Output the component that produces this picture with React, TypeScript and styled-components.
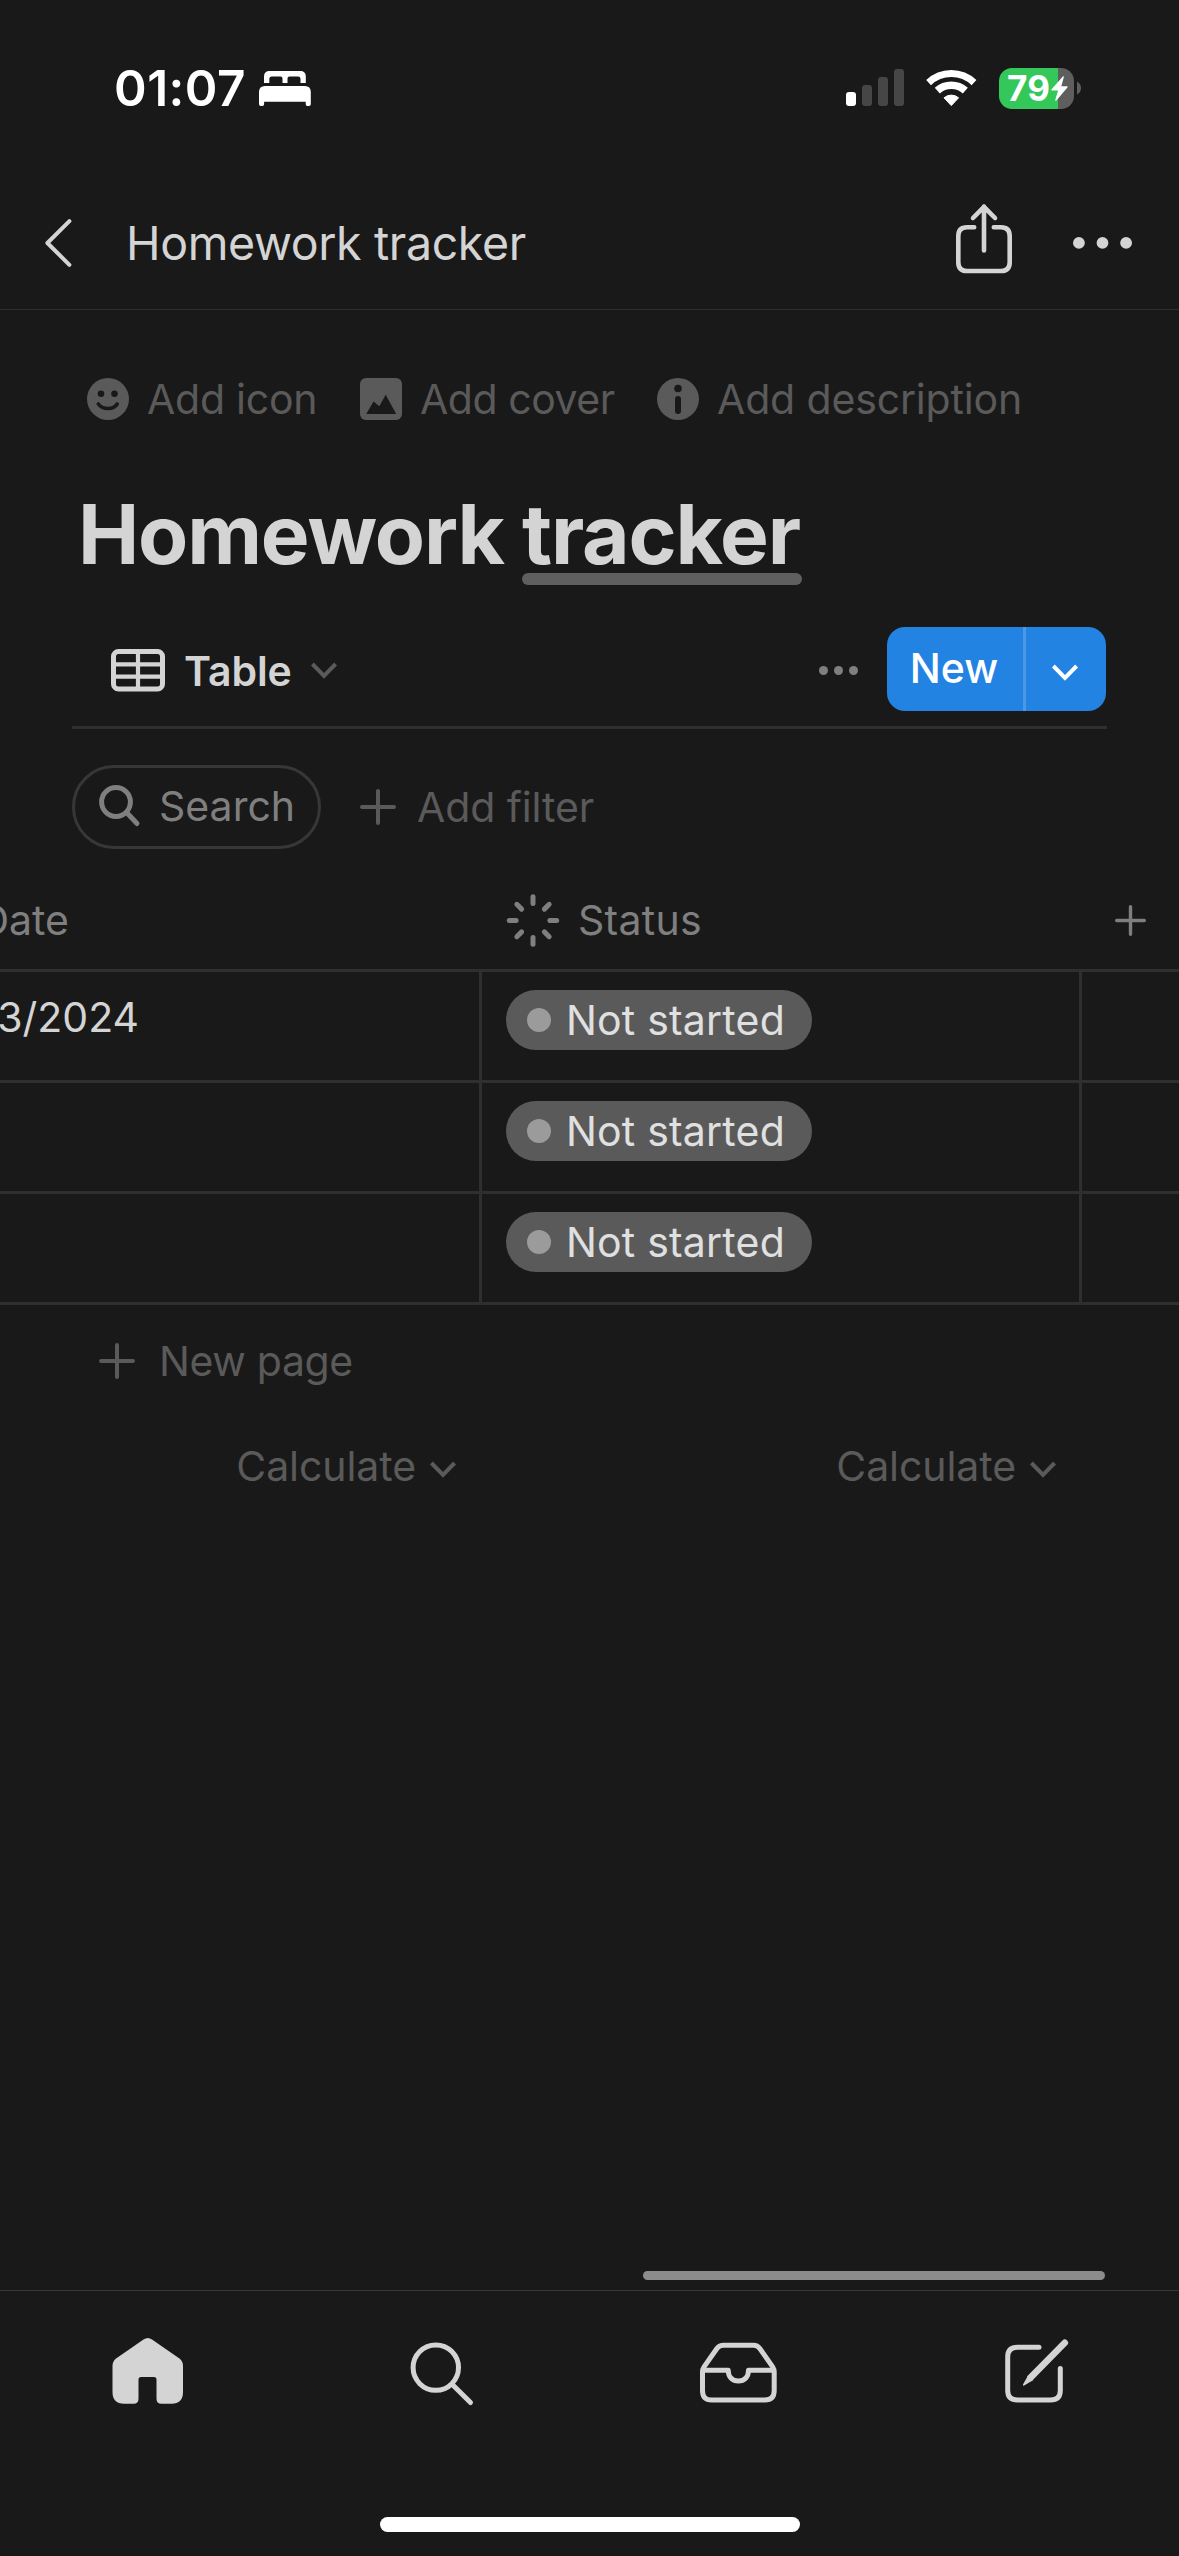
import React from "react";
import styled, { createGlobalStyle } from "styled-components";

const color = {
  bg: "#191919",
  text: "#d4d4d4",
  muted: "#7f7f7f",
  faint: "#5a5a5a",
  line: "#2f2f2f",
  blue: "#2383e2",
};

const GlobalStyle = createGlobalStyle`
  * { box-sizing: border-box; }
  body {
    margin: 0;
    background: ${color.bg};
    font-family: Inter, "Liberation Sans", sans-serif;
    -webkit-font-smoothing: antialiased;
  }
  svg { display: block; flex: none; overflow: visible; }
  button {
    border: 0;
    padding: 0;
    background: none;
    color: inherit;
    font: inherit;
    letter-spacing: inherit;
  }
`;

const Screen = styled.div`
  width: 1179px;
  height: 2556px;
  display: flex;
  flex-direction: column;
  overflow: hidden;
  background: ${color.bg};
  color: ${color.text};
  font-size: 41px;
  line-height: 50px;
  white-space: nowrap;
`;

/* ---------- status bar ---------- */

const StatusBar = styled.header`
  height: 176px;
  padding: 0 98px 0 114px;
  display: flex;
  align-items: center;
  justify-content: space-between;
  color: #fff;
`;

const Clock = styled.div`
  display: flex;
  align-items: center;
  gap: 13px;
  font-size: 49.5px;
  font-weight: 600;
  letter-spacing: 0.5px;
`;

const Indicators = styled.div`
  display: flex;
  align-items: center;
  gap: 22px;
`;

const Battery = styled.div`
  display: flex;
  align-items: center;
  gap: 3px;
`;

const BatteryBody = styled.div<{ $level: number }>`
  width: 75px;
  height: 41px;
  padding-left: 8px;
  border-radius: 13px;
  display: flex;
  align-items: center;
  gap: 1px;
  background: linear-gradient(to right, #34c759 ${(p) => p.$level}%, #5e5e5e ${(p) => p.$level}%);
  font-size: 35px;
  line-height: 41px;
  font-weight: 700;
  letter-spacing: 0.3px;
`;

/* ---------- navigation bar ---------- */

const NavBar = styled.nav`
  height: 134px;
  padding: 1px 47px 0 45px;
  display: flex;
  align-items: center;
  border-bottom: 1px solid #2e2e2e;
`;

const NavTitle = styled.div`
  flex: 1;
  padding-left: 54px;
  font-size: 46.5px;
  line-height: 56px;
  letter-spacing: -0.38px;
`;

const NavActions = styled.div`
  display: flex;
  align-items: center;
  gap: 61px;

  svg:first-child { margin-bottom: 8px; }
`;

/* ---------- page head ---------- */

const PageActions = styled.div`
  height: 42px;
  margin-top: 68px;
  padding-left: 87px;
  display: flex;
  align-items: center;
  color: ${color.faint};
`;

const PageAction = styled.button<{ $width: number; $tracking: number }>`
  width: ${(p) => p.$width}px;
  display: flex;
  align-items: center;
  gap: 18px;
  line-height: 42px;
  letter-spacing: ${(p) => p.$tracking}px;
`;

const PageTitle = styled.h1`
  margin: 66px 0 0 78px;
  font-size: 82px;
  line-height: 98px;
  font-weight: 700;
  letter-spacing: -1.18px;
`;

const MarkedWord = styled.span`
  position: relative;

  &::after {
    content: "";
    position: absolute;
    left: 0;
    right: -2px;
    bottom: -1px;
    height: 12px;
    border-radius: 6px;
    background: #5f5f5f;
  }
`;

/* ---------- view toolbar ---------- */

const ViewBar = styled.div`
  height: 102px;
  margin: 43px 72px 0;
  padding: 0 1px 15px 39px;
  display: flex;
  align-items: center;
  border-bottom: 3px solid ${color.line};
`;

const ViewTab = styled.button`
  flex: 1;
  display: flex;
  align-items: center;
  font-weight: 600;

  svg { margin-top: 2px; }
`;

const ViewName = styled.span`
  width: 127px;
  margin: 3px 0 0 19px;
  text-align: left;
  letter-spacing: -0.1px;
`;

const ViewOptions = styled.button`
  padding-top: 3px;
`;

const NewButton = styled.div`
  width: 219px;
  height: 84px;
  margin-left: 29px;
  display: flex;
  border-radius: 18px;
  background: ${color.blue};
  color: #fff;
  font-weight: 500;
  overflow: hidden;
`;

const NewLabel = styled.button`
  width: 139px;
  padding: 0 2px 2px 0;
  border-right: 3px solid #4a98e6;
`;

const NewMenu = styled.button`
  flex: 1;
  padding: 6px 2px 0 0;
  display: flex;
  align-items: center;
  justify-content: center;
`;

const FilterBar = styled.div`
  margin: 36px 72px 0;
  display: flex;
  align-items: center;
  gap: 39px;
`;

const SearchPill = styled.button`
  width: 249px;
  height: 84px;
  padding: 0 0 2px 24px;
  display: flex;
  align-items: center;
  gap: 18px;
  border: 3px solid #373737;
  border-radius: 42px;
  color: ${color.muted};
`;

const GhostButton = styled.button<{ $gap: number; $tracking: number }>`
  display: flex;
  align-items: center;
  gap: ${(p) => p.$gap}px;
  letter-spacing: ${(p) => p.$tracking}px;
  color: ${color.faint};
`;

/* ---------- table ---------- */

const Table = styled.section`
  margin-top: 22px;
`;

const gridColumns = "482px 600px 97px";

const HeaderRow = styled.div`
  height: 101px;
  display: grid;
  grid-template-columns: ${gridColumns};
  align-items: center;
  border-bottom: 3px solid ${color.line};
  color: ${color.muted};
`;

const HeaderCell = styled.div<{ $pad?: number }>`
  padding-left: ${(p) => p.$pad ?? 0}px;
  display: flex;
  align-items: center;
  gap: 19px;
  letter-spacing: 0.3px;
`;

const ClippedText = styled.span<{ $visible: number }>`
  width: ${(p) => p.$visible}px;
  display: flex;
  justify-content: flex-end;
  letter-spacing: 0;
`;

const Row = styled.div`
  height: 111px;
  display: grid;
  grid-template-columns: ${gridColumns};
  border-bottom: 3px solid ${color.line};
`;

const Cell = styled.div<{ $last?: boolean }>`
  padding: 18px 24px 0;
  border-right: ${(p) => (p.$last ? "0" : `3px solid ${color.line}`)};
`;

const DateCell = styled(Cell)`
  padding: 20px 0 0;
`;

const Tag = styled.span`
  width: 306px;
  height: 60px;
  padding-left: 21px;
  display: flex;
  align-items: center;
  gap: 15px;
  border-radius: 30px;
  background: ${color.faint};
  color: #e0e0e0;
  letter-spacing: 0.2px;
`;

const TagDot = styled.i`
  width: 24px;
  height: 24px;
  border-radius: 50%;
  background: #9b9b9b;
`;

const NewPageRow = styled.div`
  height: 111px;
  padding-left: 99px;
  display: flex;
  align-items: center;
`;

const SummaryRow = styled.div`
  height: 100px;
  display: grid;
  grid-template-columns: ${gridColumns};
  align-items: center;
  color: ${color.faint};
`;

const Calculate = styled.button`
  padding-right: 26px;
  display: flex;
  align-items: center;
  justify-content: flex-end;
  gap: 14px;
  letter-spacing: -0.08px;

  svg { margin-top: 7px; }
`;

/* ---------- bottom ---------- */

const ScrollThumb = styled.div`
  width: 462px;
  height: 9px;
  margin: auto 74px 10px auto;
  border-radius: 5px;
  background: #8c8c8c;
`;

const TabBar = styled.footer`
  height: 266px;
  padding: 41px 107px 24px;
  display: flex;
  flex-direction: column;
  align-items: center;
  justify-content: space-between;
  border-top: 1px solid #363636;
`;

const Tabs = styled.div`
  width: 100%;
  display: flex;
  justify-content: space-between;
`;

const HomeIndicator = styled.div`
  width: 420px;
  height: 15px;
  border-radius: 8px;
  background: #fff;
`;

/* ---------- icons ---------- */

const BedIcon = () => (
  <svg width="52" height="36" viewBox="0 0 52 36" fill="#fff">
    <path d="M5 13V6.5Q5 1 10.5 1H41.3Q46.8 1 46.8 6.5V13H41.5V9Q41.5 6.4 39 6.4H30.5Q28.5 6.4 28.5 8.4V13H23.5V8.4Q23.5 6.4 21.5 6.4H12.8Q10.3 6.4 10.3 9V13Z" />
    <path d="M0 34V22Q0 16 6 16H45.8Q51.8 16 51.8 22V34Q51.8 36 50 36H48.4Q46.7 36 46.7 34V31.7H5.1V34Q5.1 36 3.4 36H1.8Q0 36 0 34Z" />
  </svg>
);

const SignalIcon = () => (
  <svg width="58" height="38" viewBox="0 0 58 38" fill="#464646">
    <rect x="0" y="23" width="10" height="14" rx="3" fill="#fff" />
    <rect x="16" y="16" width="10" height="21" rx="3" />
    <rect x="32" y="8" width="10" height="29" rx="3" />
    <rect x="48" y="0" width="10" height="37" rx="3" />
  </svg>
);

const WifiIcon = () => (
  <svg width="51" height="38" viewBox="0 0 51 38" fill="none" stroke="#fff">
    <path d="M2.6 13.6A33 33 0 0 1 48 13.6" strokeWidth="7" />
    <path d="M11.3 21.6A20.9 20.9 0 0 1 39.3 21.6" strokeWidth="7.6" />
    <path d="M25.3 36.6L18 28.8A11.2 11.2 0 0 1 32.6 28.8Z" fill="#fff" strokeWidth="1" strokeLinejoin="round" />
  </svg>
);

const BoltIcon = () => (
  <svg width="17" height="25" viewBox="0 0 17 25" fill="#fff">
    <path d="M11.8 0.6Q13.2 -0.4 12.8 1.3L10.3 10.2H16Q17.2 10.3 16.4 11.4L5.4 24.4Q3.9 25.4 4.3 23.7L7.1 14.6H0.9Q-0.3 14.4 0.6 13.3Z" />
  </svg>
);

const BatteryCap = () => (
  <svg width="4" height="14" viewBox="0 0 4 14">
    <path d="M0 0.5Q4 2.5 4 7T0 13.5Z" fill="#5e5e5e" />
  </svg>
);

const BackIcon = () => (
  <svg width="27" height="48" viewBox="0 0 27 48" fill="none" stroke={color.text} strokeWidth="4" strokeLinecap="round" strokeLinejoin="round">
    <path d="M24.4 2.2L2.4 24L24.4 45.8" />
  </svg>
);

const ShareIcon = () => (
  <svg width="56" height="70" viewBox="0 0 56 70" fill="none" stroke={color.text} strokeWidth="4.6" strokeLinecap="round" strokeLinejoin="round">
    <path d="M18.2 23.2H11Q2.3 23.2 2.3 32V58.2Q2.3 67 11 67H45Q53.7 67 53.7 58.2V32Q53.7 23.2 45 23.2H37.8" />
    <path d="M28 46.5V2.6M17 14L28 2.8L39 14" />
  </svg>
);

const MoreIcon = ({ r, step, fill }: { r: number; step: number; fill: string }) => (
  <svg width={2 * (r + step)} height={2 * r} fill={fill}>
    {[0, 1, 2].map((i) => (
      <circle key={i} cx={r + i * step} cy={r} r={r} />
    ))}
  </svg>
);

const SmileIcon = () => (
  <svg width="42" height="42" viewBox="0 0 42 42">
    <circle cx="21" cy="21" r="21" fill={color.faint} />
    <circle cx="14" cy="15.8" r="3.3" fill={color.bg} />
    <circle cx="27.5" cy="15.8" r="3.3" fill={color.bg} />
    <path d="M11.3 26Q14.5 30.5 21 30.5T30.2 26" fill="none" stroke={color.bg} strokeWidth="3.6" strokeLinecap="round" />
  </svg>
);

const CoverIcon = () => (
  <svg width="42" height="42" viewBox="0 0 42 42">
    <rect width="42" height="42" rx="6" fill={color.faint} />
    <path d="M6.2 36L13.6 23.5L19.3 28.2L25.7 16.8L36.2 36Z" fill={color.bg} />
  </svg>
);

const InfoIcon = () => (
  <svg width="42" height="42" viewBox="0 0 42 42">
    <circle cx="21" cy="21" r="21" fill={color.faint} />
    <circle cx="21" cy="10.5" r="3.8" fill={color.bg} />
    <rect x="18" y="18" width="6" height="18" rx="3" fill={color.bg} />
  </svg>
);

const TableIcon = () => (
  <svg width="54" height="42" viewBox="0 0 54 42" fill="none" stroke={color.text}>
    <rect x="2.5" y="2.5" width="49" height="37.5" rx="5" strokeWidth="5" />
    <path d="M27 2V40M3 15.3H51M3 27.6H51" strokeWidth="4.2" />
  </svg>
);

const ChevronIcon = ({ stroke }: { stroke: string }) => (
  <svg width="26" height="17" viewBox="0 0 26 17" fill="none" stroke={stroke} strokeWidth="4">
    <path d="M1.4 2L13 13.8L24.6 2" />
  </svg>
);

const MagnifierIcon = () => (
  <svg width="42" height="42" viewBox="0 0 42 42" fill="none" stroke={color.muted} strokeWidth="5" strokeLinecap="round">
    <circle cx="17" cy="17" r="14.4" />
    <path d="M27.6 27.6L38 38.5" />
  </svg>
);

const PlusIcon = ({ size, stroke, weight }: { size: number; stroke: string; weight: number }) => {
  const mid = size / 2;
  const start = weight / 2;
  const end = size - start;
  return (
    <svg width={size} height={size} fill="none" stroke={stroke} strokeWidth={weight} strokeLinecap="round">
      <path d={`M${mid} ${start}V${end}M${start} ${mid}H${end}`} />
    </svg>
  );
};

const StatusIcon = () => (
  <svg width="53" height="53" viewBox="0 0 53 53" stroke={color.muted} strokeWidth="5" strokeLinecap="round">
    {[0, 45, 90, 135, 180, 225, 270, 315].map((angle) => (
      <line
        key={angle}
        x1="27"
        x2="27"
        y1={angle % 90 === 0 ? 2.8 : 3.6}
        y2={angle % 90 === 0 ? 9.6 : 10.4}
        transform={`rotate(${angle} 27 26.5)`}
      />
    ))}
  </svg>
);

const HomeTabIcon = () => (
  <svg width="80" height="80" viewBox="0 0 80 80" fill={color.text}>
    <path d="M36.5 7.6Q40.75 4.6 45 7.6L72.8 26.8Q76 29.6 76 34V60Q76 71.7 64.5 71.7H54.5Q49.5 71.7 49.5 66.7V47.5Q49.5 45 47 45H34Q31.5 45 31.5 47.5V66.7Q31.5 71.7 26.5 71.7H17Q5.5 71.7 5.5 60V34Q5.5 29.6 8.7 26.8Z" />
  </svg>
);

const SearchTabIcon = () => (
  <svg width="80" height="80" viewBox="0 0 80 80" fill="none" stroke={color.text} strokeWidth="5" strokeLinecap="round">
    <circle cx="33.8" cy="35.6" r="22.7" />
    <path d="M50.8 53L68.5 70.6" />
  </svg>
);

const InboxTabIcon = () => (
  <svg width="80" height="80" viewBox="0 0 80 80" fill="none" stroke={color.text} strokeWidth="5" strokeLinejoin="round">
    <path d="M26.5 13.3H56.5Q60.5 13.3 62.8 16.5L75.5 34.6Q77.2 37.2 77.2 40V58.5Q77.2 68 68 68H14.7Q5.5 68 5.5 58.5V40Q5.5 37.2 7.2 34.6L19.9 16.5Q22.5 13.3 26.5 13.3Z" />
    <path d="M5.5 38.3H31.2C31.2 45 35.5 49 41.4 49S51.5 45 51.5 38.3H77.2" />
  </svg>
);

const ComposeTabIcon = () => (
  <svg width="80" height="80" viewBox="0 0 80 80" fill="none" stroke={color.text} strokeWidth="5" strokeLinecap="round">
    <path d="M47 15.3H25.5Q15.7 15.3 15.7 25V58.5Q15.7 68 25.5 68H58.5Q68.3 68 68.3 58.5V36.6" />
    <path d="M72.8 10.8L38.5 45.6" strokeWidth="6.6" />
    <path d="M36 43.4L31 52.4Q30.6 54 32.2 53.6L41 48.2Z" fill={color.text} stroke="none" />
  </svg>
);

/* ---------- page ---------- */

const rows = [
  { date: "3/2024", status: "Not started" },
  { date: "", status: "Not started" },
  { date: "", status: "Not started" },
];

export default function App() {
  return (
    <>
      <GlobalStyle />
      <Screen>
        <StatusBar>
          <Clock>
            01:07
            <BedIcon />
          </Clock>
          <Indicators>
            <SignalIcon />
            <WifiIcon />
            <Battery>
              <BatteryBody $level={79}>
                79
                <BoltIcon />
              </BatteryBody>
              <BatteryCap />
            </Battery>
          </Indicators>
        </StatusBar>

        <NavBar>
          <BackIcon />
          <NavTitle>Homework tracker</NavTitle>
          <NavActions>
            <ShareIcon />
            <MoreIcon r={5.9} step={23.6} fill={color.text} />
          </NavActions>
        </NavBar>

        <PageActions>
          <PageAction $width={273} $tracking={-0.25}>
            <SmileIcon />
            Add icon
          </PageAction>
          <PageAction $width={297} $tracking={-0.45}>
            <CoverIcon />
            Add cover
          </PageAction>
          <PageAction $width={370} $tracking={-0.15}>
            <InfoIcon />
            Add description
          </PageAction>
        </PageActions>

        <PageTitle>
          Homework <MarkedWord>tracker</MarkedWord>
        </PageTitle>

        <ViewBar>
          <ViewTab>
            <TableIcon />
            <ViewName>Table</ViewName>
            <ChevronIcon stroke={color.faint} />
          </ViewTab>
          <ViewOptions>
            <MoreIcon r={4.5} step={15} fill={color.muted} />
          </ViewOptions>
          <NewButton>
            <NewLabel>New</NewLabel>
            <NewMenu>
              <ChevronIcon stroke="#fff" />
            </NewMenu>
          </NewButton>
        </ViewBar>

        <FilterBar>
          <SearchPill>
            <MagnifierIcon />
            Search
          </SearchPill>
          <GhostButton $gap={21} $tracking={-0.1}>
            <PlusIcon size={36} stroke={color.faint} weight={4} />
            Add filter
          </GhostButton>
        </FilterBar>

        <Table>
          <HeaderRow>
            <HeaderCell>
              <ClippedText $visible={69}>Date</ClippedText>
            </HeaderCell>
            <HeaderCell $pad={24}>
              <StatusIcon />
              Status
            </HeaderCell>
            <HeaderCell $pad={33}>
              <PlusIcon size={31} stroke={color.muted} weight={3.4} />
            </HeaderCell>
          </HeaderRow>
          {rows.map((row, i) => (
            <Row key={i}>
              <DateCell>
                <ClippedText $visible={139}>{row.date}</ClippedText>
              </DateCell>
              <Cell>
                <Tag>
                  <TagDot />
                  {row.status}
                </Tag>
              </Cell>
              <Cell $last />
            </Row>
          ))}
          <NewPageRow>
            <GhostButton $gap={24} $tracking={-0.35}>
              <PlusIcon size={36} stroke={color.faint} weight={4} />
              New page
            </GhostButton>
          </NewPageRow>
          <SummaryRow>
            <Calculate>
              Calculate
              <ChevronIcon stroke={color.faint} />
            </Calculate>
            <Calculate>
              Calculate
              <ChevronIcon stroke={color.faint} />
            </Calculate>
          </SummaryRow>
        </Table>

        <ScrollThumb />
        <TabBar>
          <Tabs>
            <HomeTabIcon />
            <SearchTabIcon />
            <InboxTabIcon />
            <ComposeTabIcon />
          </Tabs>
          <HomeIndicator />
        </TabBar>
      </Screen>
    </>
  );
}
